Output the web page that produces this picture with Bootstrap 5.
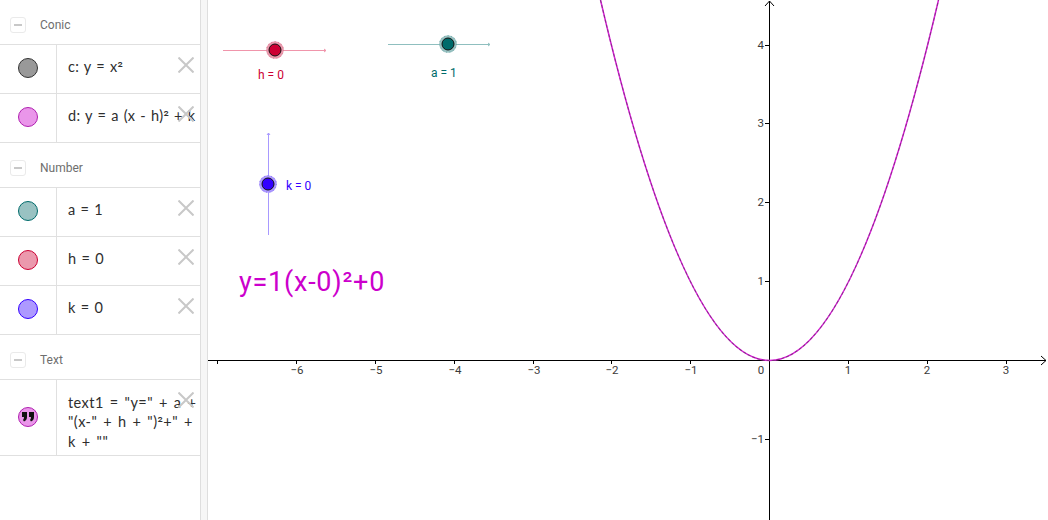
<!DOCTYPE html>
<html lang="en">
<head>
<meta charset="utf-8">
<title>Parabola</title>
<link href="https://cdn.jsdelivr.net/npm/bootstrap@5.3.0/dist/css/bootstrap.min.css" rel="stylesheet">
<style>
html,body{height:520px;overflow:hidden;background:#fff;font-family:Roboto,sans-serif;}
.app-shell{height:520px;}
.algebra-pane{width:200px;flex:none;}
.splitter{width:8px;flex:none;background:#f6f6f6;border-left:1px solid #dedede;border-right:1px solid #dedede;}
.canvas-pane{flex:1 1 auto;min-width:0;}
.canvas-pane svg{display:block;}
.group-head{height:44px;padding-left:10px;color:#6e6e6e;font-size:12px;gap:14px;padding-top:5px;}
.group-head.algebra-row{height:45px;padding-top:6px;}
.toggle-box{width:16px;height:16px;border:1px solid #eaeaea;border-radius:3px;}
.toggle-box::after{content:"";width:8px;height:2px;background:#c8c8c8;}
.algebra-row{height:49px;border-top:1px solid #e0e0e0;}
.algebra-row.tall{height:77px;border-bottom:1px solid #e0e0e0;}
.marble-cell{width:57px;flex:none;border-right:1px solid #e0e0e0;padding-bottom:3px;}
.tall .marble-cell{padding-bottom:2px;}
.marble{width:20px;height:20px;border-radius:50%;border:1px solid #000;}
.m-gray{background:#999;border-color:#333;}
.m-pink{background:#ea96ea;border-color:#b01fb0;}
.m-teal{background:#99c2c2;border-color:#006b6b;}
.m-red{background:#eb99ad;border-color:#cc0033;}
.m-blue{background:#ad99ff;border-color:#3300ff;}
.formula{padding-left:11px;padding-bottom:4px;font-size:14.5px;color:#2e2e2e;white-space:nowrap;font-family:Lato,sans-serif;letter-spacing:.3px;word-spacing:1px;}
.formula.wrap{line-height:19px;padding-bottom:0;padding-top:9px;word-spacing:1.8px;letter-spacing:.45px;}
.sup-glyph{font-family:Roboto,sans-serif;}
.del-x{position:absolute;left:178px;top:12px;width:16px;height:16px;}
.tick-txt{font:11.5px Roboto,sans-serif;fill:#3a3a3a;}
</style>
</head>
<body>
<div class="app-shell d-flex">
  <div class="algebra-pane bg-white">
    <div class="group-head d-flex align-items-center"><span class="toggle-box d-flex align-items-center justify-content-center"></span><span>Conic</span></div>
    <div class="algebra-row d-flex position-relative">
      <div class="marble-cell d-flex align-items-center justify-content-center"><span class="marble m-gray"></span></div>
      <div class="formula d-flex align-items-center"><div>c: y = x<span class="sup-glyph">²</span></div></div>
      <svg class="del-x" viewBox="0 0 16 16"><path d="M.5.5l15 15M15.500.5l-15 15" stroke="#c8c8c8" stroke-width="2" fill="none"/></svg>
    </div>
    <div class="algebra-row d-flex position-relative">
      <div class="marble-cell d-flex align-items-center justify-content-center"><span class="marble m-pink"></span></div>
      <div class="formula d-flex align-items-center"><div>d: y = a (x - h)<span class="sup-glyph">²</span> + k</div></div>
      <svg class="del-x" viewBox="0 0 16 16"><path d="M.5.5l15 15M15.500.5l-15 15" stroke="#c8c8c8" stroke-width="2" fill="none"/></svg>
    </div>
    <div class="group-head algebra-row d-flex align-items-center"><span class="toggle-box d-flex align-items-center justify-content-center"></span><span>Number</span></div>
    <div class="algebra-row d-flex position-relative">
      <div class="marble-cell d-flex align-items-center justify-content-center"><span class="marble m-teal"></span></div>
      <div class="formula d-flex align-items-center">a = 1</div>
      <svg class="del-x" viewBox="0 0 16 16"><path d="M.5.5l15 15M15.500.5l-15 15" stroke="#c8c8c8" stroke-width="2" fill="none"/></svg>
    </div>
    <div class="algebra-row d-flex position-relative">
      <div class="marble-cell d-flex align-items-center justify-content-center"><span class="marble m-red"></span></div>
      <div class="formula d-flex align-items-center">h = 0</div>
      <svg class="del-x" viewBox="0 0 16 16"><path d="M.5.5l15 15M15.500.5l-15 15" stroke="#c8c8c8" stroke-width="2" fill="none"/></svg>
    </div>
    <div class="algebra-row d-flex position-relative">
      <div class="marble-cell d-flex align-items-center justify-content-center"><span class="marble m-blue"></span></div>
      <div class="formula d-flex align-items-center">k = 0</div>
      <svg class="del-x" viewBox="0 0 16 16"><path d="M.5.5l15 15M15.500.5l-15 15" stroke="#c8c8c8" stroke-width="2" fill="none"/></svg>
    </div>
    <div class="group-head algebra-row d-flex align-items-center"><span class="toggle-box d-flex align-items-center justify-content-center"></span><span>Text</span></div>
    <div class="algebra-row tall d-flex position-relative">
      <div class="marble-cell d-flex align-items-center justify-content-center"><span class="marble m-pink d-flex align-items-center justify-content-center"><svg width="12" height="10" viewBox="0 0 12 10"><path d="M0 0h5v5q0 3-3 4.500L1 8q1-1 1-3H0zM7 0h5v5q0 3-3 4.500L8 8q1-1 1-3H7z" fill="#111"/></svg></span></div>
      <div class="formula wrap d-flex align-items-center"><div>text1 = "y=" + a +<br>"(x-" + h + ")<span class="sup-glyph">²</span>+" +<br>k + ""</div></div>
      <svg class="del-x" viewBox="0 0 16 16"><path d="M.5.5l15 15M15.500.5l-15 15" stroke="#c8c8c8" stroke-width="2" fill="none"/></svg>
    </div>
  </div>
  <div class="splitter"></div>
  <div class="canvas-pane bg-white">
    <svg id="plot" width="840" height="520" viewBox="208 0 840 520">
      <!-- sliders -->
      <path d="M223 50.500H326M324 49l2 1.500-2 1.500" fill="none" stroke="#f095ab" stroke-width="1"/>
      <circle cx="275" cy="50" r="8.800" fill="#eb99ad"/>
      <circle cx="275" cy="50" r="8.300" fill="none" stroke="#c9728a" stroke-width=".8" stroke-dasharray="1 2.500"/>
      <circle cx="275" cy="50" r="6" fill="#cc0033" stroke="#111" stroke-width="1"/>
      <text x="258" y="79" font-size="12" fill="#cc0033" font-family="Roboto,sans-serif">h = 0</text>
      <path d="M388 44.500H490M488 43l2 1.500-2 1.500" fill="none" stroke="#8fbfbf" stroke-width="1"/>
      <circle cx="448" cy="44" r="8.800" fill="#99c2c2"/>
      <circle cx="448" cy="44" r="8.300" fill="none" stroke="#5f9c9c" stroke-width=".8" stroke-dasharray="1 2.500"/>
      <circle cx="448" cy="44" r="6" fill="#006b6b" stroke="#111" stroke-width="1"/>
      <text x="431" y="77" font-size="12" fill="#006b6b" font-family="Roboto,sans-serif">a = 1</text>
      <path d="M268.500 235V133M267 135l1.500-2 1.500 2" fill="none" stroke="#a899ff" stroke-width="1"/>
      <circle cx="268" cy="184" r="8.800" fill="#ad99ff"/>
      <circle cx="268" cy="184" r="8.300" fill="none" stroke="#7c66ee" stroke-width=".8" stroke-dasharray="1 2.500"/>
      <circle cx="268" cy="184" r="6" fill="#3300ff" stroke="#111" stroke-width="1"/>
      <text x="286" y="190" font-size="12" fill="#3300ff" font-family="Roboto,sans-serif">k = 0</text>
      <text x="239" y="291" font-size="27" fill="#cc00cc" font-family="Roboto,sans-serif" letter-spacing=".75">y=1(x-0)²+0</text>
      <!-- axes -->
      <g stroke="#000" stroke-width="1" fill="none">
        <line x1="208" y1="360.500" x2="1046" y2="360.500"/>
        <line x1="769.500" y1="1" x2="769.500" y2="520"/>
        <path d="M1041 356l5 4.500-5 4.500M765 6l4.500-5 4.500 5"/>
      </g>
      <g id="ticks" stroke="#000" stroke-width="1">
        <path d="M217.500 360v4M296.500 360v4M375.500 360v4M454.500 360v4M533.500 360v4M611.500 360v4M690.500 360v4M848.500 360v4M927.500 360v4M1006.500 360v4"/>
        <path d="M765 45.500h4M765 123.500h4M765 202.500h4M765 281.500h4M765 439.500h4"/>
      </g>
      <g class="tick-lbls" text-anchor="middle">
        <text class="tick-txt" x="297" y="374">−6</text>
        <text class="tick-txt" x="376" y="374">−5</text>
        <text class="tick-txt" x="455" y="374">−4</text>
        <text class="tick-txt" x="534" y="374">−3</text>
        <text class="tick-txt" x="612" y="374">−2</text>
        <text class="tick-txt" x="691" y="374">−1</text>
        <text class="tick-txt" x="761" y="374">0</text>
        <text class="tick-txt" x="848" y="374">1</text>
        <text class="tick-txt" x="927" y="374">2</text>
        <text class="tick-txt" x="1006" y="374">3</text>
      </g>
      <g text-anchor="end">
        <text class="tick-txt" x="764" y="49">4</text>
        <text class="tick-txt" x="764" y="127">3</text>
        <text class="tick-txt" x="764" y="206">2</text>
        <text class="tick-txt" x="764" y="285">1</text>
        <text class="tick-txt" x="764" y="443">−1</text>
      </g>
      <!-- curves -->
      <path d="M600.500 0Q769.500 721 938.500 0" fill="none" stroke="#d81fd8" stroke-width="1.500"/>
      <path d="M600.500 0Q769.500 721 938.500 0" fill="none" stroke="#333" stroke-width="1.100" stroke-opacity=".45" stroke-dasharray="3 2"/>
    </svg>
  </div>
</div>
<script src="https://cdn.jsdelivr.net/npm/bootstrap@5.3.0/dist/js/bootstrap.bundle.min.js"></script>
</body>
</html>
